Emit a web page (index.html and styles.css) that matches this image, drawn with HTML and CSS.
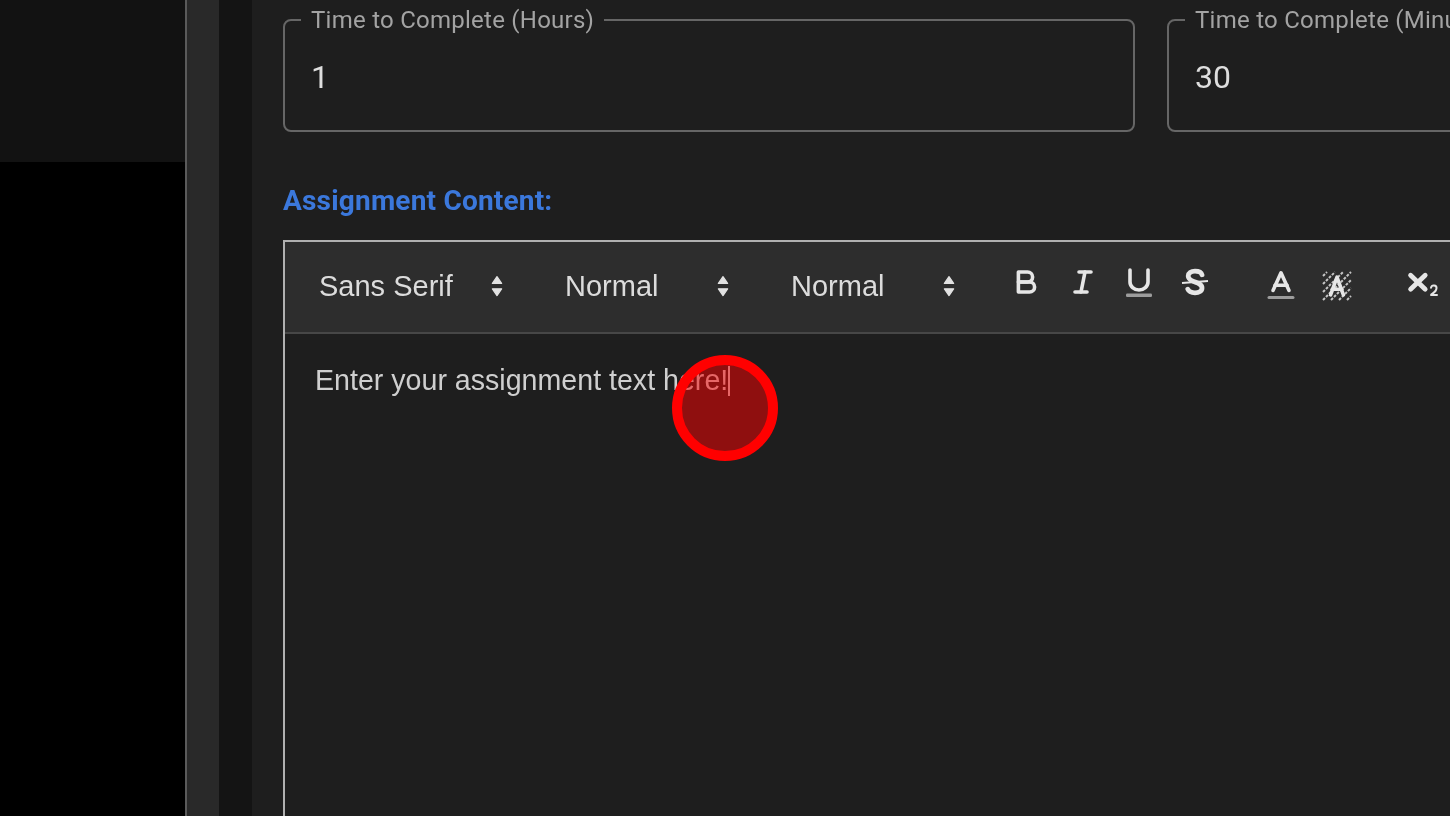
FILE: index.html
```html
<!DOCTYPE html>
<html lang="en">
<head>
<meta charset="utf-8">
<title>Assignment Content</title>
<link rel="stylesheet" href="styles.css">
</head>
<body>
<div class="app">
  <aside class="side"><div class="side-top"></div></aside>
  <div class="rail"></div>
  <div class="gutter"></div>
  <main class="main">
    <div class="fields">
      <fieldset class="field">
        <legend class="field-label">Time to Complete (Hours)</legend>
        <div class="field-value">1</div>
      </fieldset>
      <fieldset class="field">
        <legend class="field-label">Time to Complete (Minutes)</legend>
        <div class="field-value">30</div>
      </fieldset>
    </div>
    <h2 class="section-title">Assignment Content:</h2>
    <section class="editor">
      <div class="toolbar">
        <div class="picker picker-font"><span>Sans Serif</span>
          <svg class="arrows" viewBox="0 0 18 18"><polygon points="6.4 7 9 3.2 11.6 7"/><polygon points="6.4 10 9 13.8 11.6 10"/></svg></div>
        <div class="picker"><span>Normal</span>
          <svg class="arrows" viewBox="0 0 18 18"><polygon points="6.4 7 9 3.2 11.6 7"/><polygon points="6.4 10 9 13.8 11.6 10"/></svg></div>
        <div class="picker picker-last"><span>Normal</span>
          <svg class="arrows" viewBox="0 0 18 18"><polygon points="6.4 7 9 3.2 11.6 7"/><polygon points="6.4 10 9 13.8 11.6 10"/></svg></div>
        <div class="group">
          <svg class="icon" viewBox="0 0 18 18"><path class="st" d="M5.2,4H9.8A2.5,2.5,0,0,1,12.3,6.5v0A2.5,2.5,0,0,1,9.8,9H5.2V4Z"/><path class="st" d="M5.2,9h5.6A2.5,2.5,0,0,1,13.3,11.5v0A2.5,2.5,0,0,1,10.8,14H5.2V9Z"/></svg>
          <svg class="icon" viewBox="0 0 18 18"><line class="st" x1="7.5" x2="13.5" y1="4" y2="4"/><line class="st" x1="5.5" x2="11.5" y1="14" y2="14"/><line class="st" x1="8.5" x2="10.5" y1="14" y2="4"/></svg>
          <svg class="icon" viewBox="0 0 18 18"><path class="st" d="M5,3V9a4.5,4,0,0,0,4.5,4H9.5a4.5,4,0,0,0,4.5-4V3"/><rect class="fl dim" x="3" y="14.8" width="13" height="1.7" rx=".6"/></svg>
          <svg class="icon" viewBox="0 0 18 18"><path class="st heavy" d="M13,5.4C12.6,4 11.1,3.6 9.5,3.6C7.5,3.6 6.1,4.5 6.1,6C6.1,8 8.1,8.4 9.5,9C11.3,9.6 13,10.1 13,12C13,13.6 11.5,14.4 9.5,14.4C7.7,14.4 6.4,13.8 5.9,12.6"/><line class="thin" x1="16" x2="3" y1="8.5" y2="9.5"/></svg>
        </div>
        <div class="group">
          <svg class="icon" viewBox="0 0 18 18"><line class="st dim" x1="3" x2="15" y1="16.8" y2="16.8"/><polyline class="st" points="5 13.2 9 4.4 13 13.2"/><line class="st" x1="12" x2="6" y1="10.6" y2="10.6"/></svg>
          <svg class="icon" viewBox="0 0 18 18"><g class="thin hatch"><line x1="2" x2="4" y1="6" y2="4"/><line x1="2" x2="8" y1="10" y2="4"/><line x1="2" x2="12" y1="14" y2="4"/><line x1="2" x2="16" y1="18" y2="4"/><line x1="6" x2="16" y1="18" y2="8"/><line x1="10" x2="16" y1="18" y2="12"/><line x1="14" x2="16" y1="18" y2="16"/></g><polyline class="st" points="5.8 15.4 9 6.6 12.2 15.4"/><line class="st" x1="11.4" x2="6.6" y1="12.6" y2="12.6"/></svg>
        </div>
        <div class="group">
          <svg class="icon" viewBox="0 0 18 18"><path class="fl" d="M15.5,15H13.861a3.858,3.858,0,0,0,1.914-2.975,1.8,1.8,0,0,0-1.6-1.751A1.921,1.921,0,0,0,12.021,11.7a.5,.5,0,1,0,.957.291.914,.914,0,0,1,1.053-.725.81,.81,0,0,1,.744.762c0,1.076-1.17,1.87-1.94,2.431A1.456,1.456,0,0,0,12,15.5a.5,.5,0,0,0,.5.5h3A.5,.5,0,0,0,15.5,15Z"/><line class="st heavy" x1="2.3" x2="9.6" y1="5.6" y2="12.6"/><line class="st heavy" x1="9.6" x2="2.3" y1="5.6" y2="12.6"/></svg>
        </div>
      </div>
      <div class="content"><p class="line">Enter your assignment text here!<span class="caret"></span></p></div>
    </section>
  </main>
</div>
<div class="pointer"></div>
</body>
</html>
```

FILE: styles.css
```css
* { box-sizing: border-box; }
html, body { margin: 0; height: 816px; overflow: hidden; background: #000; }

.app {
  display: flex;
  height: 816px;
  width: 1450px;
  filter: blur(0.7px);
  font-family: Roboto, "Liberation Sans", sans-serif;
}
.side { width: 185px; flex: none; background: #000; }
.side-top { height: 162px; background: #121212; }
.rail { width: 34px; flex: none; background: #292929; border-left: 2px solid #5a5a5a; }
.gutter { width: 33px; flex: none; background: #141414; }

.main {
  flex: 1;
  min-width: 0;
  background: #1e1e1e;
  padding: 6px 0 0 31px;
  overflow: hidden;
}

.fields { display: flex; gap: 32px; width: 1740px; }
.field {
  width: 852px;
  height: 126px;
  flex: none;
  margin: 0;
  padding: 0 26px;
  border: 2px solid #666;
  border-radius: 8px;
  min-width: 0;
}
.field-label {
  padding: 0 10px;
  margin-left: -10px;
  font-size: 24px;
  letter-spacing: 0.25px;
  line-height: 28px;
  color: #a3a3a3;
  white-space: nowrap;
}
.field-value {
  margin-top: 23px;
  font-size: 32px;
  line-height: 40px;
  color: #dedede;
}

.section-title {
  margin: 51px 0 0;
  font-size: 28px;
  letter-spacing: 0.2px;
  line-height: 36px;
  font-weight: 700;
  color: #3b78dc;
}

.editor {
  width: 1400px;
  height: 600px;
  margin-top: 21px;
  border: 2px solid #b0b0b0;
  border-bottom: 0;
}
.toolbar {
  display: flex;
  align-items: flex-start;
  height: 92px;
  padding: 0 0 0 18px;
  background: #2d2d2d;
  border-bottom: 2px solid #474747;
}
.picker {
  width: 196px;
  height: 89px;
  flex: none;
  margin-right: 30px;
  padding: 0 6px 0 16px;
  display: flex;
  align-items: center;
  justify-content: space-between;
  font-family: "Liberation Sans", Arial, sans-serif;
  font-size: 29px;
  color: #dcdcdc;
}
.picker-font { width: 216px; }
.picker-last { margin-right: 27px; }
.arrows { width: 32px; height: 32px; flex: none; fill: #e2e2e2; stroke: #e2e2e2; stroke-width: .7; stroke-linejoin: round; }

.group { display: flex; flex: none; gap: 20px; margin: 22px 31px 0 0; padding: 0 10px; }
.icon { width: 36px; height: 36px; flex: none; fill: none; overflow: visible; }
.st { fill: none; stroke: #e6e6e6; stroke-width: 1.8; stroke-linecap: round; stroke-linejoin: round; }
.st.heavy { stroke-width: 2.4; }
.thin { fill: none; stroke: #e6e6e6; stroke-width: 1; }
.hatch { stroke: #c4c4c4; stroke-dasharray: 1.4 .7; }
.fl { fill: #e6e6e6; }
.dim { opacity: .6; }
.st.dim { stroke-width: 1.5; }

.content { padding: 25px 30px; }
.line {
  margin: 0;
  font-family: "Liberation Sans", Arial, sans-serif;
  font-size: 28.6px;
  line-height: 42px;
  color: #cfcfcf;
  white-space: nowrap;
}
.caret {
  display: inline-block;
  width: 2px;
  height: 30px;
  vertical-align: -6px;
  background: #cfcfcf;
}

.pointer {
  position: absolute;
  left: 672px;
  top: 355px;
  width: 106px;
  height: 106px;
  border: 10px solid #ff0000;
  border-radius: 50%;
  background: rgba(255, 0, 0, 0.5);
}
```
